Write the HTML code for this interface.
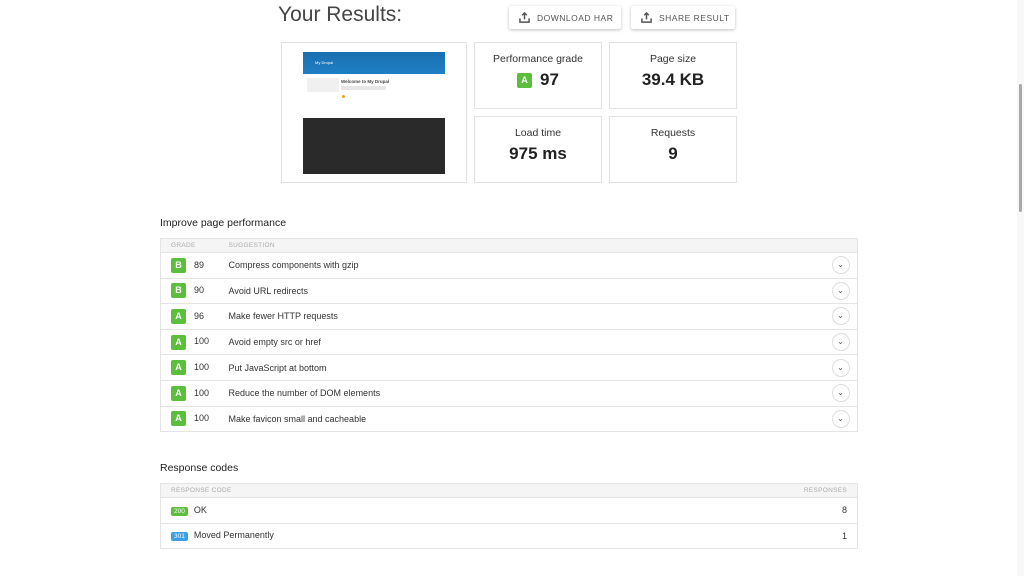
<!DOCTYPE html>
<html><head><meta charset="utf-8"><style>
*{box-sizing:border-box;margin:0;padding:0}
body{width:1024px;height:576px;background:#fff;font-family:"Liberation Sans",sans-serif;color:#222;position:relative;overflow:hidden}
.abs{position:absolute}
.title{left:278px;top:3px;font-size:21px;font-weight:300;color:#444;letter-spacing:0px}
.btn{top:6px;height:23px;background:#fff;box-shadow:0 1px 3px rgba(0,0,0,.25);border-radius:2px;font-size:8.5px;color:#555;letter-spacing:.5px;display:flex;align-items:center;padding-left:10px;gap:7px}
.card{border:1px solid #e2e2e2;background:#fff;text-align:center}
.card .l{font-size:10.5px;color:#333;margin-top:10px}
.card .v{font-size:17px;font-weight:bold;margin-top:5px;color:#222}
.gA{background:#5cbf3c;color:#fff;font-size:9px;font-weight:bold;display:inline-block;width:15px;height:15px;line-height:15px;border-radius:2px;text-align:center;vertical-align:middle}
.h{font-size:10.5px;color:#222}
table{border-collapse:collapse;position:absolute;left:160px;width:698px;font-size:9px}
th{background:#f5f5f5;color:#aaa;font-weight:normal;font-size:6.5px;text-align:left;height:14px;border:1px solid #e4e4e4;border-left:none;border-right:none;padding-left:10px;letter-spacing:.3px}
td{height:25.6px;border-bottom:1px solid #e4e4e4;color:#333}
.t{border:1px solid #e4e4e4}
.chev{width:18px;height:18px;border:1px solid #ddd;border-radius:50%;display:inline-block;text-align:center;line-height:15px;font-size:8px;color:#555}
.code{display:inline-block;color:#fff;font-size:6.5px;padding:1px 3px;border-radius:2px;margin-right:6px}
</style></head><body>
<div class="abs title">Your Results:</div>
<div class="abs btn" style="left:509px;width:112px"><svg width="11" height="11" viewBox="0 0 12 12"><path d="M1 7v4h10V7M6 1v7M3.5 3.5L6 1l2.5 2.5" stroke="#555" stroke-width="1.6" fill="none"/></svg>DOWNLOAD HAR</div>
<div class="abs btn" style="left:631px;width:104px"><svg width="11" height="11" viewBox="0 0 12 12"><path d="M1 7v4h10V7M6 1v7M3.5 3.5L6 1l2.5 2.5" stroke="#555" stroke-width="1.6" fill="none"/></svg>SHARE RESULT</div>

<div class="abs card" style="left:281px;top:42px;width:186px;height:141px">
 <div class="abs" style="left:21px;top:9px;width:142px;height:22px;background:linear-gradient(#1a6fb0,#1f7fc4)"><span style="color:#fff;font-size:4px;position:absolute;left:12px;top:8px">My Drupal</span></div>
 <div class="abs" style="left:25px;top:35px;width:32px;height:14px;background:#f0f0f0"></div>
 <div class="abs" style="left:59px;top:36px;font-size:4.5px;font-weight:bold;color:#444">Welcome to My Drupal</div>
 <div class="abs" style="left:59px;top:43px;width:45px;height:4px;background:#e6e6e6"></div>
 <div class="abs" style="left:60px;top:52px;width:3px;height:3px;border-radius:50%;background:#f0a030"></div>
 <div class="abs" style="left:21px;top:75px;width:142px;height:56px;background:#2a2a2a"></div>
</div>
<div class="abs card" style="left:474px;top:42px;width:128px;height:67px"><div class="l">Performance grade</div><div class="v"><span class="gA" style="margin-right:8px">A</span>97</div></div>
<div class="abs card" style="left:609px;top:42px;width:128px;height:67px"><div class="l">Page size</div><div class="v">39.4 KB</div></div>
<div class="abs card" style="left:474px;top:116px;width:128px;height:67px"><div class="l">Load time</div><div class="v">975 ms</div></div>
<div class="abs card" style="left:609px;top:116px;width:128px;height:67px"><div class="l">Requests</div><div class="v">9</div></div>

<div class="abs h" style="left:160px;top:217px">Improve page performance</div>
<table class="t" style="top:238px">
<tr><th style="width:68px">GRADE</th><th style="padding-left:0">SUGGESTION</th><th style="width:26px"></th></tr>
<tr><td style="padding-left:10px"><span class="gA">B</span><span style="margin-left:8px">89</span></td><td>Compress components with gzip</td><td><span class="chev">⌄</span></td></tr>
<tr><td style="padding-left:10px"><span class="gA">B</span><span style="margin-left:8px">90</span></td><td>Avoid URL redirects</td><td><span class="chev">⌄</span></td></tr>
<tr><td style="padding-left:10px"><span class="gA">A</span><span style="margin-left:8px">96</span></td><td>Make fewer HTTP requests</td><td><span class="chev">⌄</span></td></tr>
<tr><td style="padding-left:10px"><span class="gA">A</span><span style="margin-left:8px">100</span></td><td>Avoid empty src or href</td><td><span class="chev">⌄</span></td></tr>
<tr><td style="padding-left:10px"><span class="gA">A</span><span style="margin-left:8px">100</span></td><td>Put JavaScript at bottom</td><td><span class="chev">⌄</span></td></tr>
<tr><td style="padding-left:10px"><span class="gA">A</span><span style="margin-left:8px">100</span></td><td>Reduce the number of DOM elements</td><td><span class="chev">⌄</span></td></tr>
<tr><td style="padding-left:10px"><span class="gA">A</span><span style="margin-left:8px">100</span></td><td>Make favicon small and cacheable</td><td><span class="chev">⌄</span></td></tr>
</table>

<div class="abs h" style="left:160px;top:462px">Response codes</div>
<table class="t" style="top:483px">
<tr><th>RESPONSE CODE</th><th style="text-align:right;padding-right:10px">RESPONSES</th></tr>
<tr><td style="padding-left:10px"><span class="code" style="background:#5cbf3c">200</span>OK</td><td style="text-align:right;padding-right:10px">8</td></tr>
<tr><td style="padding-left:10px"><span class="code" style="background:#3aa0e8">301</span>Moved Permanently</td><td style="text-align:right;padding-right:10px">1</td></tr>
</table>

<div class="abs" style="left:1017px;top:0;width:7px;height:576px;background:#f8f8f8"></div>
<div class="abs" style="left:1019px;top:84px;width:3px;height:128px;background:#a8a8a8;border-radius:2px"></div>
</body></html>
